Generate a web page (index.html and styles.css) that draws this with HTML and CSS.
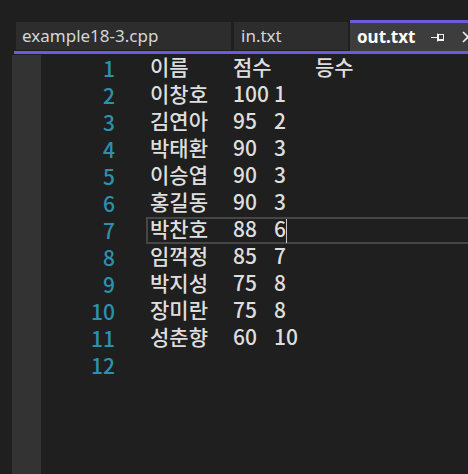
FILE: index.html
```html
<!DOCTYPE html>
<html lang="ko">
<head>
<meta charset="utf-8">
<title>out.txt</title>
<link rel="stylesheet" href="styles.css">
</head>
<body>
<div class="tabbar">
  <div class="tab tab-wide">example18-3.cpp</div>
  <div class="tab tab-mid">in.txt</div>
  <div class="tab tab-active">
    <span class="tab-label">out.txt</span>
    <svg class="pin" width="13" height="11" viewBox="0 0 13 11">
      <path d="M0 5.5H6" stroke="#f0f0f0" stroke-width="1"/>
      <path d="M6.5 1.5V9.5" stroke="#f0f0f0" stroke-width="1"/>
      <rect x="7.5" y="2.5" width="5" height="6" fill="none" stroke="#f0f0f0" stroke-width="1"/>
      <path d="M7.5 7.5H12.5" stroke="#f0f0f0" stroke-width="1"/>
    </svg>
    <svg class="close" width="12" height="12" viewBox="0 0 12 12">
      <path d="M1 1L11 11M11 1L1 11" stroke="#f0f0f0" stroke-width="1.6"/>
    </svg>
  </div>
</div>
<div class="accent"></div>
<div class="editor">
  <div class="margin-strip"></div>
  <div class="linenos">
    <div class="ln">1</div><div class="ln">2</div><div class="ln">3</div><div class="ln">4</div>
    <div class="ln">5</div><div class="ln">6</div><div class="ln">7</div><div class="ln">8</div>
    <div class="ln">9</div><div class="ln">10</div><div class="ln">11</div><div class="ln">12</div>
  </div>
  <div class="text">
    <div class="row"><span class="c-name">이름</span><span class="c-head">점수</span><span class="c-rank">등수</span></div>
    <div class="row"><span class="c-name">이창호</span><span class="c-score">100</span><span class="c-rank">1</span></div>
    <div class="row"><span class="c-name">김연아</span><span class="c-score">95</span><span class="c-rank">2</span></div>
    <div class="row"><span class="c-name">박태환</span><span class="c-score">90</span><span class="c-rank">3</span></div>
    <div class="row"><span class="c-name">이승엽</span><span class="c-score">90</span><span class="c-rank">3</span></div>
    <div class="row"><span class="c-name">홍길동</span><span class="c-score">90</span><span class="c-rank">3</span></div>
    <div class="row row-current"><span class="c-name">박찬호</span><span class="c-score">88</span><span class="c-rank">6</span><span class="caret"></span></div>
    <div class="row"><span class="c-name">임꺽정</span><span class="c-score">85</span><span class="c-rank">7</span></div>
    <div class="row"><span class="c-name">박지성</span><span class="c-score">75</span><span class="c-rank">8</span></div>
    <div class="row"><span class="c-name">장미란</span><span class="c-score">75</span><span class="c-rank">8</span></div>
    <div class="row"><span class="c-name">성춘향</span><span class="c-score">60</span><span class="c-rank">10</span></div>
    <div class="row"></div>
  </div>
</div>
</body>
</html>
```
FILE: styles.css
```css
html, body {
  margin: 0;
  padding: 0;
  background: #1f1f1f;
  width: 468px;
  height: 474px;
  overflow: hidden;
}

.tabbar {
  display: flex;
  align-items: flex-start;
  padding-left: 16px;
  height: 51px;
  font-family: "Noto Sans", sans-serif;
  font-size: 17px;
  color: #d6d6d6;
}

.tab {
  box-sizing: border-box;
  flex: none;
  margin-top: 22px;
  height: 28px;
  line-height: 28px;
  padding-left: 6px;
  background: #2d2d2d;
  white-space: nowrap;
}

.tab-wide {
  width: 215px;
}

.tab-mid {
  width: 114px;
  margin-left: 3px;
  padding-left: 7px;
}

.tab-active {
  flex: 1 1 auto;
  min-width: 0;
  overflow: hidden;
  margin-left: 2px;
  margin-top: 20px;
  height: 31px;
  border-top: 3px solid #6d5bdc;
  background: #3d3d3d;
  color: #ffffff;
  font-weight: 700;
  padding-left: 7px;
  display: flex;
  align-items: center;
}

.tab-label {
  line-height: 28px;
  margin-top: -1px;
}

.pin {
  flex: none;
  margin-left: 16px;
}

.close {
  flex: none;
  margin-left: 18px;
}

.accent {
  height: 3px;
  margin-left: 14px;
  background: #6d5bdc;
  margin-bottom: 1px;
}

.editor {
  display: flex;
  height: 419px;
  font-family: "Noto Sans CJK KR", "Noto Sans", sans-serif;
  font-size: 21px;
  font-weight: 500;
}

.margin-strip {
  width: 29px;
  margin-left: 12px;
  background: #333333;
}

.linenos {
  width: 74px;
  color: #2b91af;
  text-align: right;
}

.ln {
  box-sizing: border-box;
  height: 27px;
  padding-top: 2px;
  line-height: 23px;
}

.ln span {
  display: block;
}

.text {
  flex: 1;
  margin-left: 31px;
  color: #dedede;
}

.row {
  box-sizing: border-box;
  height: 27px;
  display: flex;
  align-items: flex-start;
  border: 2px solid transparent;
  border-right: none;
  padding-left: 2px;
  line-height: 23px;
  white-space: nowrap;
}

.row-current {
  border-color: #464646;
}

.c-name,
.c-head,
.c-score,
.c-rank {
  flex: none;
  margin-top: -2px;
}

.c-name {
  width: 83px;
}

.c-head {
  width: 82px;
}

.c-score {
  width: 41px;
}

.caret {
  align-self: center;
  width: 1px;
  height: 24px;
  background: #cfcfcf;
}
```
